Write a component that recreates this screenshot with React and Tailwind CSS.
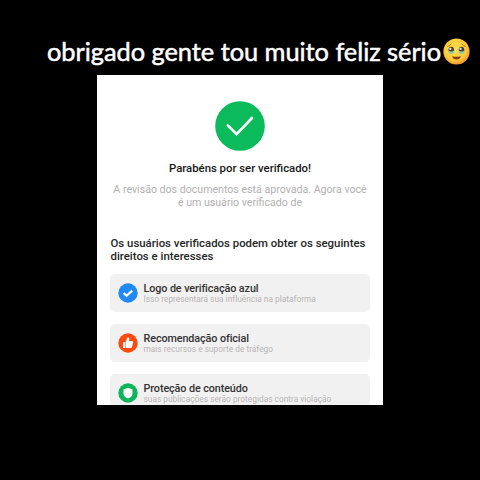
import React from 'react';

function CheckIcon() {
  return (
    <svg viewBox="0 0 20 20" className="w-5 h-5 shrink-0">
      <circle cx="10" cy="10" r="9.7" fill="#2089f5" />
      <path d="M5.6 10l3 2.8 5.6-5.2" fill="none" stroke="#fff" strokeWidth="2.2" />
    </svg>
  );
}

function ThumbIcon() {
  return (
    <svg viewBox="0 0 20 20" className="w-5 h-5 shrink-0">
      <circle cx="10" cy="10" r="9.7" fill="#fa4b0c" />
      <path d="M5 9h2v6.1H5z" fill="#fff" />
      <path
        d="M7.5 9l1.8-4.2c.3-.7 1.9-.4 2 .7.1.8-.1 1.7-.4 2.6H14c.8 0 1.3.7 1.1 1.5L14 13.9c-.2.8-.7 1.2-1.4 1.2H7.5z"
        fill="#fff"
      />
    </svg>
  );
}

function ShieldIcon() {
  return (
    <svg viewBox="0 0 20 20" className="w-5 h-5 shrink-0">
      <circle cx="10" cy="10" r="9.7" fill="#0cb45c" />
      <path d="M10 4.8l4.5 1.6v4c0 2.5-2 4.1-4.5 5.1-2.5-1-4.5-2.6-4.5-5.1v-4z" fill="#fff" />
    </svg>
  );
}

function TearyFace() {
  return (
    <svg viewBox="0 0 28 28" className="w-[27px] h-[27px] shrink-0">
      <defs>
        <radialGradient id="face" cx="0.45" cy="0.4" r="0.62">
          <stop offset="0" stopColor="#ffe04f" />
          <stop offset="0.7" stopColor="#fdc838" />
          <stop offset="1" stopColor="#ee922a" />
        </radialGradient>
      </defs>
      <circle cx="14" cy="14" r="13.6" fill="url(#face)" />
      <path d="M4.8 8.7q2-.5 3.6-2.4M19.6 6.3q1.6 1.9 3.6 2.4" fill="none" stroke="#a0702a" strokeWidth="0.9" strokeLinecap="round" />
      <ellipse cx="8.6" cy="12.4" rx="2.9" ry="3.2" fill="#4b4032" />
      <ellipse cx="19.2" cy="12.4" rx="2.9" ry="3.2" fill="#4b4032" />
      <path d="M5.3 12.6q3 2.6 6.4.4-.3 3.7-3.1 3.7t-3.3-4.1zM16.1 13q3.4 2.2 6.4-.4-.5 4.1-3.3 4.1t-3.1-3.7z" fill="#94c9a8" />
      <circle cx="7.6" cy="11.2" r="1.2" fill="#d9f3ff" />
      <circle cx="18.2" cy="11.2" r="1.2" fill="#d9f3ff" />
      <path d="M9.4 18.8q4.6 1.5 9.2 0-1.1 3.4-4.6 3.4t-4.6-3.4z" fill="#87391b" />
    </svg>
  );
}

const benefits = [
  {
    icon: <CheckIcon />,
    title: 'Logo de verificação azul',
    text: 'Isso representará sua influência na plataforma',
  },
  {
    icon: <ThumbIcon />,
    title: 'Recomendação oficial',
    text: 'mais recursos e suporte de tráfego',
  },
  {
    icon: <ShieldIcon />,
    title: 'Proteção de conteúdo',
    text: 'suas publicações serão protegidas contra violação',
  },
];

export default function App() {
  return (
    <div className="w-[480px] h-[480px] bg-black overflow-hidden font-['Roboto',sans-serif]">
      <header className="flex items-center h-[74px] pl-[47px] pt-7">
        <h1 className="w-[396px] shrink-0 whitespace-nowrap text-white text-[25.4px] leading-[46px] tracking-[-0.04px] font-normal [-webkit-text-stroke:0.5px_white] font-['Lato',sans-serif]">
          obrigado gente tou muito feliz sério
        </h1>
        <TearyFace />
      </header>

      <main className="ml-[97px] mt-[0.5px] w-[285.5px] h-[330.5px] bg-white overflow-hidden pl-[13px] pr-[12.5px]">
        <div className="flex flex-col items-center pt-[26px] text-center">
          <svg viewBox="0 0 50 50" className="w-[50px] h-[50px]">
            <circle cx="25" cy="25" r="24.8" fill="#0bba5b" />
            <path d="M12.8 24.3l8.8 8.8L37 17" fill="none" stroke="#fff" strokeWidth="2.6" strokeLinecap="round" />
          </svg>
          <h2 className="mt-[10px] mb-px text-[11.35px] leading-[14px] font-medium text-[#171717] whitespace-nowrap">
            Parabéns por ser verificado!
          </h2>
          <p className="mt-[7px] text-[10.62px] leading-[13px] text-[#b2b0b1] whitespace-nowrap">
            A revisão dos documentos está aprovada. Agora você
            <br />é um usuário verificado de
          </p>
        </div>

        <h3 className="mt-7 pl-[0.5px] text-[11.4px] leading-[13.5px] font-medium text-[#262626] whitespace-nowrap">
          Os usuários verificados podem obter os seguintes
          <br />
          direitos e interesses
        </h3>

        <div className="mt-[10px] flex flex-col gap-[11.5px]">
          {benefits.map((item) => (
            <section key={item.title} className="flex items-center gap-[5.5px] h-[38.5px] pl-2 rounded-[5px] bg-[#f2f1f1] shrink-0">
              {item.icon}
              <div className="pt-[2px] whitespace-nowrap">
                <h4 className="text-[10.8px] leading-[12px] tracking-[-0.1px] font-medium text-[#333]">{item.title}</h4>
                <p className="-mt-px mb-px text-[8.3px] leading-[10px] tracking-[0.02px] text-[#b7b5b6]">{item.text}</p>
              </div>
            </section>
          ))}
        </div>
      </main>
    </div>
  );
}
